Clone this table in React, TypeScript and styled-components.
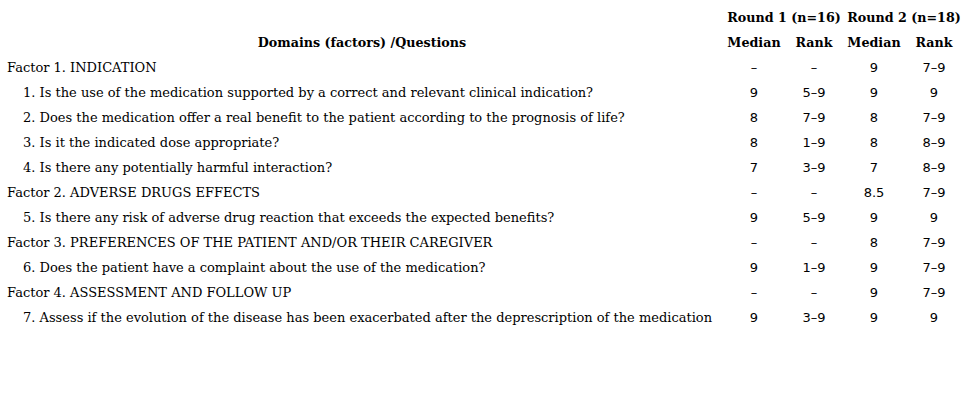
import React from "react";
import styled, { createGlobalStyle } from "styled-components";

const GlobalStyle = createGlobalStyle`
    html, body {
        margin: 0;
        padding: 0;
        background: #ffffff;
    }
`;

const Table = styled.div`
    display: grid;
    grid-template-columns: 724px repeat(4, 60px);
    grid-auto-rows: 25px;
    padding-top: 5px;
    width: 965px;
    color: #000;
    font-family: "DejaVu Serif", serif;
    font-size: 13px;
`;

const HeadCell = styled.div<{ $span?: number }>`
    grid-column: span ${p => p.$span || 1};
    display: flex;
    align-items: center;
    justify-content: center;
    font-size: 12.7px;
    font-weight: bold;
    white-space: nowrap;
`;

const LabelCell = styled.div<{ $indent?: boolean }>`
    display: flex;
    align-items: center;
    padding-left: ${p => (p.$indent ? "23px" : "7px")};
    white-space: nowrap;
`;

const NumCell = styled.div`
    display: flex;
    align-items: center;
    justify-content: center;
    font-family: "DejaVu Sans", sans-serif;
    font-size: 13px;
`;

type Row = { label: string; factor?: boolean; vals: string[] };

const rows: Row[] = [
    { label: "Factor 1. INDICATION", factor: true, vals: ["–", "–", "9", "7–9"] },
    { label: "1. Is the use of the medication supported by a correct and relevant clinical indication?", vals: ["9", "5–9", "9", "9"] },
    { label: "2. Does the medication offer a real benefit to the patient according to the prognosis of life?", vals: ["8", "7–9", "8", "7–9"] },
    { label: "3. Is it the indicated dose appropriate?", vals: ["8", "1–9", "8", "8–9"] },
    { label: "4. Is there any potentially harmful interaction?", vals: ["7", "3–9", "7", "8–9"] },
    { label: "Factor 2. ADVERSE DRUGS EFFECTS", factor: true, vals: ["–", "–", "8.5", "7–9"] },
    { label: "5. Is there any risk of adverse drug reaction that exceeds the expected benefits?", vals: ["9", "5–9", "9", "9"] },
    { label: "Factor 3. PREFERENCES OF THE PATIENT AND/OR THEIR CAREGIVER", factor: true, vals: ["–", "–", "8", "7–9"] },
    { label: "6. Does the patient have a complaint about the use of the medication?", vals: ["9", "1–9", "9", "7–9"] },
    { label: "Factor 4. ASSESSMENT AND FOLLOW UP", factor: true, vals: ["–", "–", "9", "7–9"] },
    { label: "7. Assess if the evolution of the disease has been exacerbated after the deprescription of the medication", vals: ["9", "3–9", "9", "9"] }
];

function App() {
    return (
        <>
            <GlobalStyle />
            <Table>
                <HeadCell />
                <HeadCell $span={2}>Round 1 (n=16)</HeadCell>
                <HeadCell $span={2}>Round 2 (n=18)</HeadCell>

                <HeadCell>Domains (factors) /Questions</HeadCell>
                <HeadCell>Median</HeadCell>
                <HeadCell>Rank</HeadCell>
                <HeadCell>Median</HeadCell>
                <HeadCell>Rank</HeadCell>

                {rows.map((r, i) => (
                    <React.Fragment key={i}>
                        <LabelCell $indent={!r.factor}>{r.label}</LabelCell>
                        {r.vals.map((v, j) => (
                            <NumCell key={j}>{v}</NumCell>
                        ))}
                    </React.Fragment>
                ))}
            </Table>
        </>
    );
}

export default App;
